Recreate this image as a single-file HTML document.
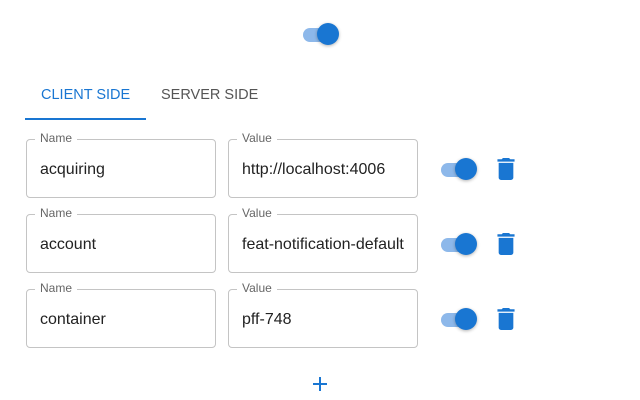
<!DOCTYPE html>
<html><head><style>
body{margin:0;width:640px;height:400px;background:#fff;font-family:"Liberation Sans",Arial,sans-serif;position:relative;overflow:hidden}
.a{position:absolute}
.tgl .tr{position:absolute;left:0;top:6px;width:32px;height:14px;border-radius:7px;background:#8db8ea}
.tgl .th{position:absolute;left:14px;top:1px;width:22px;height:22px;border-radius:50%;background:#1976d2;box-shadow:0 1px 3px rgba(0,0,0,.3)}
.f{position:absolute;height:59px;border:1px solid #c4c4c4;border-radius:4px;box-sizing:border-box}
.f .l{position:absolute;top:-9px;left:8px;padding:0 5px;background:#fff;font-size:12px;color:#666}
.f .v{position:absolute;left:13px;top:21px;font-size:16px;color:#222;white-space:nowrap}
</style></head><body>
<div class="a tgl" style="left:303px;top:22px"><div class="tr"></div><div class="th"></div></div>
<div class="a" style="left:41px;top:87px;font-size:14.5px;color:#1976d2">CLIENT SIDE</div>
<div class="a" style="left:161px;top:87px;font-size:14.5px;color:#555">SERVER SIDE</div>
<div class="a" style="left:25px;top:118px;width:121px;height:2px;background:#1976d2"></div>

<div class="f" style="left:26px;top:139px;width:190px"><span class="l">Name</span><span class="v">acquiring</span></div>
<div class="f" style="left:228px;top:139px;width:190px"><span class="l">Value</span><span class="v">http://localhost:4006</span></div>
<div class="a tgl" style="left:441px;top:157px"><div class="tr"></div><div class="th"></div></div>
<svg class="a" style="left:497px;top:158px" width="18" height="22" viewBox="5 3 14 18"><path fill="#1976d2" d="M6 19c0 1.1.9 2 2 2h8c1.1 0 2-.9 2-2V7H6v12zM19 4h-3.5l-1-1h-5l-1 1H5v2h14V4z"/></svg>

<div class="f" style="left:26px;top:214px;width:190px"><span class="l">Name</span><span class="v">account</span></div>
<div class="f" style="left:228px;top:214px;width:190px"><span class="l">Value</span><span class="v">feat-notification-default</span></div>
<div class="a tgl" style="left:441px;top:232px"><div class="tr"></div><div class="th"></div></div>
<svg class="a" style="left:497px;top:233px" width="18" height="22" viewBox="5 3 14 18"><path fill="#1976d2" d="M6 19c0 1.1.9 2 2 2h8c1.1 0 2-.9 2-2V7H6v12zM19 4h-3.5l-1-1h-5l-1 1H5v2h14V4z"/></svg>

<div class="f" style="left:26px;top:289px;width:190px"><span class="l">Name</span><span class="v">container</span></div>
<div class="f" style="left:228px;top:289px;width:190px"><span class="l">Value</span><span class="v">pff-748</span></div>
<div class="a tgl" style="left:441px;top:307px"><div class="tr"></div><div class="th"></div></div>
<svg class="a" style="left:497px;top:308px" width="18" height="22" viewBox="5 3 14 18"><path fill="#1976d2" d="M6 19c0 1.1.9 2 2 2h8c1.1 0 2-.9 2-2V7H6v12zM19 4h-3.5l-1-1h-5l-1 1H5v2h14V4z"/></svg>

<svg class="a" style="left:311px;top:375px" width="18" height="18" viewBox="0 0 18 18"><path d="M9 2v14M2 9h14" stroke="#1976d2" stroke-width="2"/></svg>
</body></html>
